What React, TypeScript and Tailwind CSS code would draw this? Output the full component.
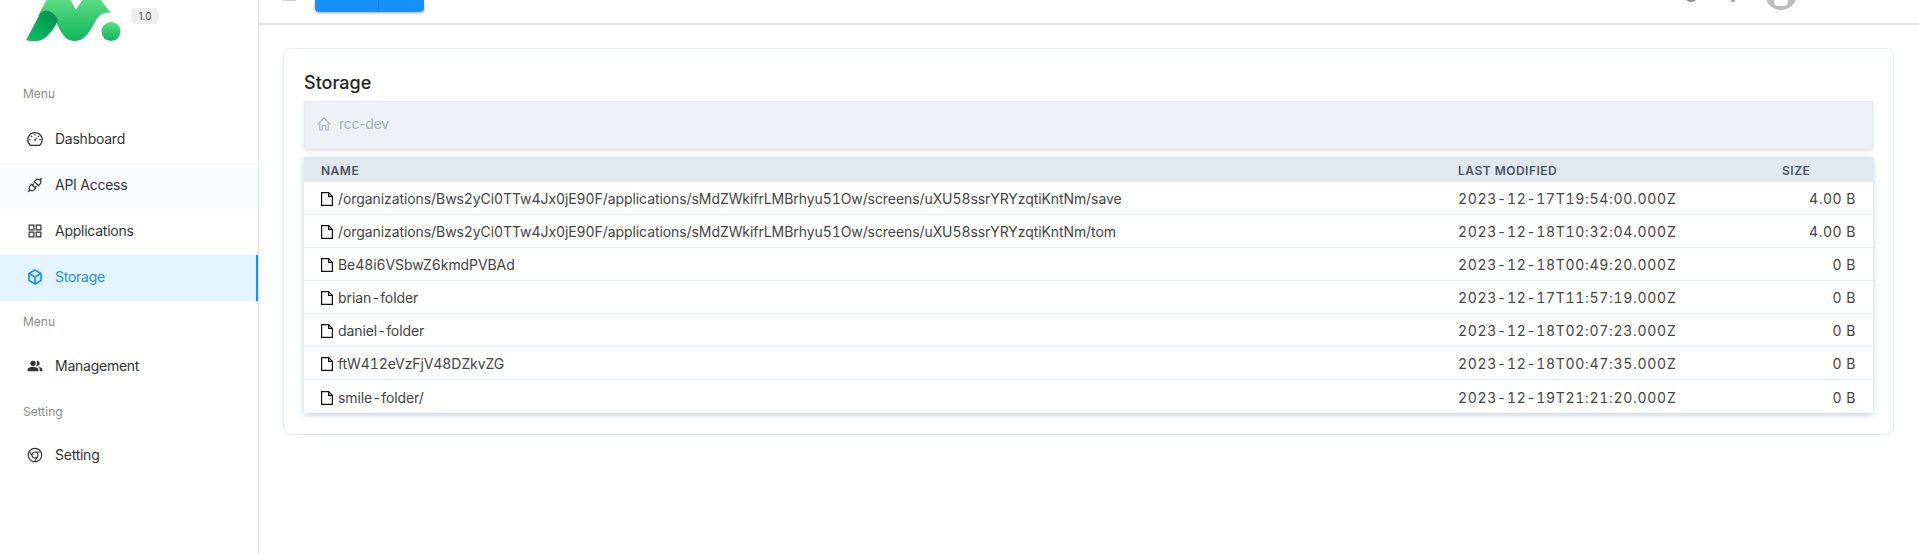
import { AiOutlineApi, AiOutlineAppstore, AiOutlineChrome, AiOutlineDashboard } from 'react-icons/ai';
import { MdPeopleAlt } from 'react-icons/md';
import type { ReactNode } from 'react';

const files = [
  { name: '/organizations/Bws2yCi0TTw4Jx0jE90F/applications/sMdZWkifrLMBrhyu51Ow/screens/uXU58ssrYRYzqtiKntNm/save', modified: '2023-12-17T19:54:00.000Z', size: '4.00 B' },
  { name: '/organizations/Bws2yCi0TTw4Jx0jE90F/applications/sMdZWkifrLMBrhyu51Ow/screens/uXU58ssrYRYzqtiKntNm/tom', modified: '2023-12-18T10:32:04.000Z', size: '4.00 B' },
  { name: 'Be48i6VSbwZ6kmdPVBAd', modified: '2023-12-18T00:49:20.000Z', size: '0 B' },
  { name: 'brian-folder', modified: '2023-12-17T11:57:19.000Z', size: '0 B' },
  { name: 'daniel-folder', modified: '2023-12-18T02:07:23.000Z', size: '0 B' },
  { name: 'ftW412eVzFjV48DZkvZG', modified: '2023-12-18T00:47:35.000Z', size: '0 B' },
  { name: 'smile-folder/', modified: '2023-12-19T21:21:20.000Z', size: '0 B' },
];

function Logo() {
  return (
    <svg width="96" height="42" viewBox="0 0 96 42" className="shrink-0">
      <defs>
        <linearGradient id="logoMain" x1="0" y1="0" x2="0" y2="1">
          <stop offset="0" stopColor="#5ddc82" />
          <stop offset="1" stopColor="#0fb45a" />
        </linearGradient>
        <linearGradient id="logoLeft" x1="1" y1="0" x2="0" y2="1">
          <stop offset="0" stopColor="#0a8a50" />
          <stop offset="0.55" stopColor="#00ad55" />
          <stop offset="1" stopColor="#1cbb66" />
        </linearGradient>
      </defs>
      <path d="M12 16 L21 -1 L44 -1 L50 10 L57 -1 L74 -1 L85 13 C78 12 74 14 70 20 C64 32 58 41 49 41 C38 41 34 30 29 20 Z" fill="url(#logoMain)" />
      <path d="M0 40 L14 14 C18 9 26 9 32 20 C27 32 18 42 8 41 C5 41 2 41 0 40 Z" fill="url(#logoLeft)" />
      <circle cx="85" cy="31.5" r="9.5" fill="url(#logoMain)" />
    </svg>
  );
}

function FileIcon() {
  return (
    <svg width="12" height="14" viewBox="0 0 12 14" fill="none" stroke="#111" strokeWidth="1.2" className="shrink-0">
      <path d="M0.6 0.6 H7.6 L11.4 4.4 V13.4 H0.6 Z" />
      <path d="M7.6 0.6 V4.4 H11.4" />
    </svg>
  );
}

function HomeIcon() {
  return (
    <svg width="14" height="14" viewBox="0 0 14 14" fill="none" stroke="#a3afc0" strokeWidth="1.1" className="shrink-0">
      <path d="M0.8 7 L7 1 L13.2 7" />
      <path d="M2.8 5.5 V13 H5.4 V8.5 H8.6 V13 H11.2 V5.5" />
    </svg>
  );
}

function CubeIcon() {
  return (
    <svg width="14" height="16" viewBox="0 0 14 16" fill="none" stroke="#1890ff" strokeWidth="1.7" strokeLinejoin="round">
      <path d="M7 1 L13 4.5 V11.5 L7 15 L1 11.5 V4.5 Z" />
      <path d="M1 4.5 L7 8 L13 4.5 M7 8 V15" />
    </svg>
  );
}

function NavItem({ icon, label, active, hover }: { icon: ReactNode; label: string; active?: boolean; hover?: boolean }) {
  return (
    <div
      className={`flex h-[46px] items-center gap-[11px] pb-[2px] pl-[26px] text-sm tracking-[-0.25px] ${
        active ? 'border-r-2 border-[#1890ff] bg-[#e3f4ff] text-[#1890ff]' : hover ? 'bg-[#f8fcff] text-[#333]' : 'text-[#333]'
      }`}
    >
      <span className="flex w-[18px] justify-center">{icon}</span>
      <span>{label}</span>
    </div>
  );
}

function Sidebar() {
  return (
    <aside className="flex w-[259px] shrink-0 flex-col border-r border-[#dfe3e8]">
      <div className="flex h-[42px] items-start pl-[26px]">
        <Logo />
        <span className="mt-[8px] ml-[9px] flex h-4 w-7 items-center justify-center rounded bg-[#eeeeee] text-[10px] text-[#555]">1.0</span>
      </div>
      <p className="mt-[44px] pl-[23px] text-xs text-[#8c8c8c]">Menu</p>
      <nav className="mt-[15px]">
        <NavItem icon={<AiOutlineDashboard size={18} />} label="Dashboard" />
        <NavItem icon={<AiOutlineApi size={18} />} label="API Access" hover />
        <NavItem icon={<AiOutlineAppstore size={18} />} label="Applications" />
        <NavItem icon={<CubeIcon />} label="Storage" active />
      </nav>
      <p className="mt-[13px] pl-[23px] text-xs text-[#8c8c8c]">Menu</p>
      <nav className="mt-[14px]">
        <NavItem icon={<MdPeopleAlt size={16} />} label="Management" />
      </nav>
      <p className="mt-[14px] pl-[23px] text-xs text-[#8c8c8c]">Setting</p>
      <nav className="mt-[13px]">
        <NavItem icon={<AiOutlineChrome size={18} />} label="Setting" />
      </nav>
    </aside>
  );
}

function Topbar() {
  return (
    <header className="flex h-[25px] items-start overflow-hidden border-b-2 border-[#e5e5e5]">
      <div className="ml-[23px] h-px w-[14px] bg-[#cfcfcf]" />
      <div className="ml-[19px] flex h-3 w-[109px] rounded-b shadow-[0_1px_3px_rgba(0,0,0,0.35)]">
        <div className="w-[64px] rounded-bl border-r border-[#0f6fd0] bg-[#1890ff]" />
        <div className="flex-1 rounded-br bg-[#1890ff]" />
      </div>
      <div className="ml-auto flex items-start">
        <div className="mt-[-12px] size-[14px] rounded-full border-2 border-[#8c8c8c]" />
        <div className="mt-[-5px] ml-[33px] h-[7px] w-1 rounded-full bg-[#9a9a9a]" />
        <div className="relative mt-[-22px] ml-[30px] mr-[122px] size-8 overflow-hidden rounded-full bg-[#bdbdbd]">
          <div className="mx-auto mt-[22px] h-[6px] w-[14px] rounded-b-sm bg-white" />
        </div>
      </div>
    </header>
  );
}

function FileTable() {
  return (
    <div className="mt-2 text-sm text-[#444] shadow-[0_2px_6px_rgba(100,116,139,0.35)]">
      <div className="grid h-[25px] grid-cols-[1137px_324px_74px] items-center bg-[#e2e8f0] px-[17px] pt-[2px] text-xs font-semibold tracking-[0.5px] text-[#4b5563] uppercase">
        <span>Name</span>
        <span>Last Modified</span>
        <span>Size</span>
      </div>
      {files.map(file => (
        <div key={file.name} className="grid h-[33px] grid-cols-[1137px_324px_74px] items-center border-b border-[#e9eef3] bg-white px-[17px] pt-[2px] tabular-nums last:border-b-0">
          <span className="flex items-center gap-[5px]">
            <FileIcon />
            <span className="tracking-[-0.08px]">{file.name}</span>
          </span>
          <span className="tracking-[0.7px]">{file.modified}</span>
          <span className="text-right tracking-[0.5px]">{file.size}</span>
        </div>
      ))}
    </div>
  );
}

export default function App() {
  return (
    <div className="flex h-[554px] w-full overflow-hidden bg-white font-['Inter','Liberation_Sans',sans-serif]">
      <Sidebar />
      <main className="min-w-0 flex-1">
        <Topbar />
        <div className="pt-[23px] pr-[25px] pl-[24px]">
          <section className="rounded-lg border border-[#e6ebf1] px-5 pt-[20px] pb-[21px]">
            <h1 className="h-[32px] text-lg leading-[28px] font-medium text-[#262626]">Storage</h1>
            <div className="flex h-12 items-center gap-2 border border-[#e6ebf1] bg-[#edf1f5] pb-[3px] pl-3 text-sm tracking-[-0.3px] text-[#a3afc0] shadow-[0_2px_4px_rgba(100,116,139,0.2)]">
              <HomeIcon />
              <span>rcc-dev</span>
            </div>
            <FileTable />
          </section>
        </div>
      </main>
    </div>
  );
}
